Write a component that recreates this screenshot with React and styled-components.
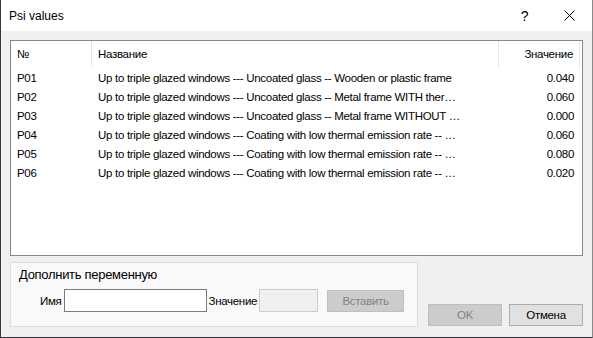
import React from "react";
import styled, { createGlobalStyle, css } from "styled-components";

const GlobalStyle = createGlobalStyle`
  html, body {
    margin: 0;
    padding: 0;
    background: #2b2833;
  }
  * {
    box-sizing: border-box;
  }
`;

const Window = styled.div`
  display: flex;
  flex-direction: column;
  width: 593px;
  height: 338px;
  background: #f0f0f0;
  border-left: 1px solid #3a3640;
  border-right: 1px solid #8a8a8a;
  border-bottom: 1px solid #3a3640;
  font-family: "Liberation Sans", Arial, sans-serif;
  font-size: 11.5px;
  letter-spacing: -0.3px;
  color: #000;
`;

const TitleBar = styled.div`
  display: flex;
  align-items: center;
  height: 31px;
  flex-shrink: 0;
  background: #fff;
  padding-left: 8px;
`;

const Caption = styled.div`
  flex: 1;
  font-size: 12px;
  letter-spacing: 0;
`;

const CaptionButton = styled.div`
  display: flex;
  align-items: center;
  justify-content: center;
  width: 45px;
  height: 30px;
  font-size: 14px;
`;

const Body = styled.div`
  display: flex;
  flex-direction: column;
  flex: 1;
  padding: 9px 9px 0 9px;
`;

const ListBox = styled.div`
  height: 216px;
  background: #fff;
  border: 1px solid #828790;
  overflow: hidden;
`;

const Row = styled.div`
  display: grid;
  grid-template-columns: 81px 407px 81px;
  align-items: center;
  height: 19px;
  white-space: nowrap;

  ${({ $header }) =>
    $header &&
    css`
      height: 26px;
      margin-bottom: 1px;
    `}
`;

const Cell = styled.div`
  padding: 0 6px;
  overflow: hidden;
  ${({ $right }) =>
    $right &&
    css`
      text-align: right;
    `}
  ${({ $header }) =>
    $header &&
    css`
      height: 26px;
      line-height: 26px;
      border-right: 1px solid #e5e5e5;
    `}
`;

const Bottom = styled.div`
  display: flex;
  align-items: flex-end;
  margin-top: 6px;
`;

const GroupBox = styled.div`
  width: 408px;
  height: 65px;
  background: #f9f9f9;
  border: 1px solid #dcdcdc;
  padding: 4px 0 0 8px;
`;

const GroupTitle = styled.div`
  font-size: 13px;
  letter-spacing: -0.3px;
  height: 22px;
`;

const FieldRow = styled.div`
  display: flex;
  align-items: center;
  padding-left: 21px;
`;

const Label = styled.span`
  margin-right: 2px;
`;

const Input = styled.div`
  height: 23px;
  width: ${({ $w }) => $w}px;
  margin-right: 2px;
  background: ${({ $disabled }) => ($disabled ? "#f0f0f0" : "#fff")};
  border: 1px solid ${({ $disabled }) => ($disabled ? "#cccccc" : "#7a7a7a")};
`;

const Button = styled.div`
  display: flex;
  align-items: center;
  justify-content: center;
  width: ${({ $w }) => $w || 74}px;
  height: 22px;
  background: ${({ $disabled }) => ($disabled ? "#cccccc" : "#e1e1e1")};
  border: 1px solid ${({ $disabled }) => ($disabled ? "#bfbfbf" : "#adadad")};
  color: ${({ $disabled }) => ($disabled ? "#838383" : "#000")};
  ${({ $gap }) =>
    $gap &&
    css`
      margin-left: ${$gap}px;
    `}
`;

const Actions = styled.div`
  display: flex;
  gap: 7px;
  margin-left: auto;
  margin-bottom: 1px;
`;

const rows = [
  ["P01", "Up to triple glazed windows --- Uncoated glass -- Wooden or plastic frame", "0.040"],
  ["P02", "Up to triple glazed windows --- Uncoated glass -- Metal frame WITH ther…", "0.060"],
  ["P03", "Up to triple glazed windows --- Uncoated glass -- Metal frame WITHOUT …", "0.000"],
  ["P04", "Up to triple glazed windows --- Coating with low thermal emission rate -- …", "0.060"],
  ["P05", "Up to triple glazed windows --- Coating with low thermal emission rate -- …", "0.080"],
  ["P06", "Up to triple glazed windows --- Coating with low thermal emission rate -- …", "0.020"],
];

export default function App() {
  return (
    <>
      <GlobalStyle />
      <Window>
        <TitleBar>
          <Caption>Psi values</Caption>
          <CaptionButton>?</CaptionButton>
          <CaptionButton>
            <svg width="11" height="11" viewBox="0 0 11 11">
              <path d="M0.5 0.5 L10.5 10.5 M10.5 0.5 L0.5 10.5" stroke="#000" strokeWidth="1" />
            </svg>
          </CaptionButton>
        </TitleBar>
        <Body>
          <ListBox>
            <Row $header>
              <Cell $header>№</Cell>
              <Cell $header>Название</Cell>
              <Cell $header $right>Значение</Cell>
            </Row>
            {rows.map(([id, name, value]) => (
              <Row key={id}>
                <Cell>{id}</Cell>
                <Cell>{name}</Cell>
                <Cell $right>{value}</Cell>
              </Row>
            ))}
          </ListBox>
          <Bottom>
            <GroupBox>
              <GroupTitle>Дополнить переменную</GroupTitle>
              <FieldRow>
                <Label>Имя</Label>
                <Input $w={143} />
                <Label>Значение</Label>
                <Input $w={59} $disabled />
                <Button $disabled $w={77} $gap={7}>Вставить</Button>
              </FieldRow>
            </GroupBox>
            <Actions>
              <Button $disabled>OK</Button>
              <Button>Отмена</Button>
            </Actions>
          </Bottom>
        </Body>
      </Window>
    </>
  );
}
